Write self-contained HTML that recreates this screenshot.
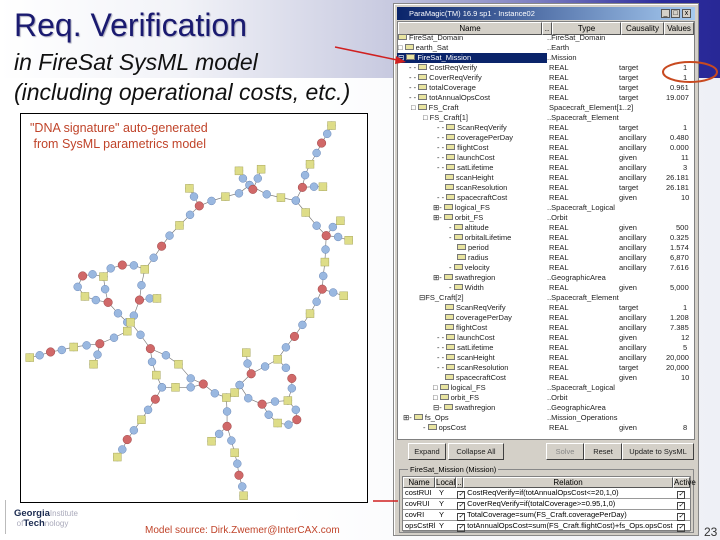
<!DOCTYPE html>
<html><head><meta charset="utf-8"><style>
*{margin:0;padding:0;box-sizing:border-box}
body{width:720px;height:540px;overflow:hidden;position:relative;background:#fff;font-family:"Liberation Sans",sans-serif}
#band{position:absolute;left:0;top:0;width:720px;height:78px;background:linear-gradient(90deg,#fff 0%,#f2f3f8 25%,#c8cae0 54%,#7a7cc0 75%,#2c2c9c 92%,#282896 100%)}
#band2{position:absolute;left:0;top:78px;width:720px;height:462px;background:linear-gradient(90deg,#fff 0%,#fff 40%,#eef0f6 100%)}
.t1{position:absolute;left:14px;top:7px;font-size:32px;color:#1a1a70;text-shadow:1px 1px 1px #aab}
.t2{position:absolute;left:14px;font-size:23px;font-style:italic;color:#111;line-height:26px}
#graph{position:absolute;left:20px;top:113px;width:348px;height:390px;border:1px solid #000;background:#fff}
#graph .cap{position:absolute;left:9px;top:6px;font-size:12.5px;color:#c0442a;line-height:16px}
#win{position:absolute;left:393px;top:3px;width:306px;height:533px;background:#d4d0c8;border:1px solid #888;box-shadow:inset 1px 1px #fff}
#title{position:absolute;left:3px;top:3px;width:298px;height:13px;background:linear-gradient(90deg,#0a246a,#a6caf0);color:#fff;font-size:7.5px;line-height:13px;padding-left:12px}
.tb{position:absolute;top:2px;width:9px;height:9px;background:#d4d0c8;border:1px solid #555;color:#000;font-size:7px;line-height:7px;text-align:center}
#tree{position:absolute;left:3px;top:17px;width:298px;height:419px;background:#fff;border:1px solid #808080}
.hd{position:absolute;top:0;height:13px;background:#d4d0c8;border:1px solid;border-color:#fff #555 #555 #fff;font-size:8px;line-height:11px;text-align:center;color:#000}
.r{position:absolute;left:0;width:296px;height:10px;font-size:7.5px;line-height:10px;color:#222;white-space:nowrap}
.r span{position:absolute}
.ic{display:inline-block;width:9px;height:6px;background:#e8e4a0;border:1px solid #777;margin-right:2px;vertical-align:0}
.sel{background:#0a246a;color:#fff}
.btn{position:absolute;top:439px;height:17px;background:#d4d0c8;border:1px solid;border-color:#fff #404040 #404040 #fff;font-size:7.5px;line-height:15px;text-align:center;color:#222}
#grp{position:absolute;left:5px;top:465px;width:295px;height:64px;border:1px solid #888}
.gl{position:absolute;left:8px;top:-5px;background:#d4d0c8;font-size:7.5px;padding:0 2px}
#tbl{position:absolute;left:2px;top:6px;width:289px;height:55px;background:#fff;border:1px solid #808080}
.r2{position:absolute;left:0;width:287px;height:11px;font-size:7.5px;line-height:10px;border-bottom:1px solid #999;white-space:nowrap}
.r2 span{position:absolute}
.cb{display:inline-block;width:8px;height:8px;border:1px solid #444;font-size:7px;line-height:6px;text-align:center;vertical-align:-1px}
</style></head><body>
<div id="band"></div><div id="band2"></div>
<div class="t1">Req. Verification</div>
<div class="t2" style="top:49px">in FireSat SysML model</div>
<div class="t2" style="top:79px">(including operational costs, etc.)</div>

<div id="graph">
<div class="cap">"DNA signature" auto-generated<br>&nbsp;from SysML parametrics model</div>
<svg width="348" height="390" viewBox="0 0 1050 1180" style="position:absolute;left:0;top:0">
<defs><marker id="m" markerUnits="userSpaceOnUse" markerWidth="28" markerHeight="28" refX="14" refY="14"><circle cx="14" cy="14" r="12" fill="#9ab8e0" stroke="#6a88b8" stroke-width="1.5"/></marker></defs>
<g fill="none" stroke="#777" stroke-width="2" marker-start="url(#m)" marker-mid="url(#m)" marker-end="url(#m)">
<polyline points="938,35 925,60 908,88 893,118 873,152 858,185 850,222 830,262 860,298 893,338 922,368 920,410 918,448 913,490 910,530 893,568 873,604 850,638 826,673 800,706 775,742 737,764 695,786 660,820 645,843 620,858 585,845 550,817 512,800 475,757 437,730 390,710 360,668 330,630 340,610 357,563 363,518 373,470 400,435 424,400 448,368 478,337 510,305 538,278 575,263 617,250 658,240 690,215 742,243 785,253 830,262"/>
<polyline points="690,215 670,195 658,172"/><polyline points="700,228 715,195 725,167"/>
<polyline points="850,222 885,220 912,220"/><polyline points="922,368 942,342 965,323"/>
<polyline points="922,368 958,372 990,382"/><polyline points="910,530 943,540 975,550"/>
<polyline points="538,278 522,250 508,225"/>
<polyline points="373,470 340,458 305,457 270,467 248,492 253,530 262,570 292,603 320,630 320,657 280,677 237,695 197,700 158,705 122,714 88,720 55,730 25,737"/>
<polyline points="248,492 215,485 185,490 170,523 192,552 225,563 262,570"/>
<polyline points="237,695 230,728 218,757"/><polyline points="357,563 388,558 410,558"/>
<polyline points="390,710 395,750 408,790 425,827 405,863 383,895 363,925 340,957 320,985 305,1015 290,1038"/>
<polyline points="425,827 466,827 512,827 550,817"/>
<polyline points="620,858 622,900 622,945 598,968 575,990"/>
<polyline points="622,945 635,988 645,1025 653,1058 658,1093 668,1127 672,1155"/>
<polyline points="660,820 686,860 728,878 767,870 806,867 818,830 818,800"/>
<polyline points="806,867 830,895 833,925 808,940 775,935 748,910 728,878"/>
<polyline points="695,786 684,755 680,722"/><polyline points="775,742 800,768"/>
</g>
<g fill="#d06868" stroke="#a04848" stroke-width="1.5">
<circle cx="908" cy="88" r="13"/><circle cx="850" cy="222" r="13"/><circle cx="922" cy="368" r="13"/><circle cx="910" cy="530" r="13"/><circle cx="826" cy="673" r="13"/><circle cx="695" cy="786" r="13"/><circle cx="538" cy="278" r="13"/><circle cx="424" cy="400" r="13"/><circle cx="305" cy="457" r="13"/><circle cx="185" cy="490" r="13"/><circle cx="262" cy="570" r="13"/><circle cx="357" cy="563" r="13"/><circle cx="237" cy="695" r="13"/><circle cx="88" cy="720" r="13"/><circle cx="390" cy="710" r="13"/><circle cx="550" cy="817" r="13"/><circle cx="405" cy="863" r="13"/><circle cx="320" cy="985" r="13"/><circle cx="622" cy="945" r="13"/><circle cx="658" cy="1093" r="13"/><circle cx="728" cy="878" r="13"/><circle cx="833" cy="925" r="13"/><circle cx="818" cy="800" r="13"/><circle cx="700" cy="228" r="13"/>
</g>
<g fill="#dedd88" stroke="#aaa860" stroke-width="1.5" transform="translate(-12,-12)">
<rect x="938" y="35" width="24" height="24"/><rect x="873" y="152" width="24" height="24"/><rect x="912" y="220" width="24" height="24"/><rect x="860" y="298" width="24" height="24"/><rect x="965" y="323" width="24" height="24"/><rect x="990" y="382" width="24" height="24"/><rect x="918" y="448" width="24" height="24"/><rect x="975" y="550" width="24" height="24"/><rect x="873" y="604" width="24" height="24"/><rect x="775" y="742" width="24" height="24"/><rect x="645" y="843" width="24" height="24"/><rect x="620" y="858" width="24" height="24"/><rect x="785" y="253" width="24" height="24"/><rect x="617" y="250" width="24" height="24"/><rect x="658" y="172" width="24" height="24"/><rect x="725" y="167" width="24" height="24"/><rect x="508" y="225" width="24" height="24"/><rect x="478" y="337" width="24" height="24"/><rect x="373" y="470" width="24" height="24"/><rect x="248" y="492" width="24" height="24"/><rect x="192" y="552" width="24" height="24"/><rect x="410" y="558" width="24" height="24"/><rect x="330" y="630" width="24" height="24"/><rect x="320" y="657" width="24" height="24"/><rect x="158" y="705" width="24" height="24"/><rect x="25" y="737" width="24" height="24"/><rect x="218" y="757" width="24" height="24"/><rect x="408" y="790" width="24" height="24"/><rect x="466" y="827" width="24" height="24"/><rect x="475" y="757" width="24" height="24"/><rect x="363" y="925" width="24" height="24"/><rect x="290" y="1038" width="24" height="24"/><rect x="575" y="990" width="24" height="24"/><rect x="645" y="1025" width="24" height="24"/><rect x="672" y="1155" width="24" height="24"/><rect x="806" y="867" width="24" height="24"/><rect x="775" y="935" width="24" height="24"/><rect x="680" y="722" width="24" height="24"/>
</g>
</svg>
</div>

<div style="position:absolute;left:5px;top:500px;width:1px;height:34px;background:#bbb"></div>
<div style="position:absolute;left:14px;top:509px;font-size:9.5px;font-weight:bold;color:#1a2a50;line-height:10px">Georgia<span style="font-weight:normal;color:#aab;font-size:8px">Institute</span><br>&nbsp;<span style="font-weight:normal;color:#aab;font-size:8px">of</span>Tech<span style="font-weight:normal;color:#aab;font-size:8px">nology</span></div>
<div style="position:absolute;left:145px;top:525px;font-size:10px;color:#c0442a">Model source: Dirk.Zwemer@InterCAX.com</div>
<div style="position:absolute;left:704px;top:525px;font-size:12px;color:#333">23</div>

<div id="win">
<div id="title">ParaMagic(TM) 16.9 sp1 - Instance02
<div class="tb" style="left:264px">_</div><div class="tb" style="left:274px">□</div><div class="tb" style="left:285px">x</div></div>
<div id="tree">
<div class="hd" style="left:0;width:144px">Name</div><div class="hd" style="left:144px;width:10px">..</div><div class="hd" style="left:154px;width:69px">Type</div><div class="hd" style="left:223px;width:43px">Causality</div><div class="hd" style="left:266px;width:30px">Values</div>
</div>
<div class="btn" style="left:14px;width:38px">Expand</div><div class="btn" style="left:54px;width:56px">Collapse All</div>
<div class="btn" style="left:152px;width:38px;color:#888">Solve</div><div class="btn" style="left:190px;width:38px">Reset</div><div class="btn" style="left:228px;width:72px">Update to SysML</div>
<div id="grp"><div class="gl">FireSat_Mission (Mission)</div>
<div id="tbl">
<div class="hd" style="left:0;width:32px;height:11px;line-height:9px">Name</div><div class="hd" style="left:32px;width:21px;height:11px;line-height:9px">Local</div><div class="hd" style="left:53px;width:7px;height:11px;line-height:9px">..</div><div class="hd" style="left:60px;width:210px;height:11px;line-height:9px">Relation</div><div class="hd" style="left:270px;width:17px;height:11px;line-height:9px">Active</div>
<div class="r2" style="top:11px"><span style="left:2px">costRUI</span><span style="left:36px">Y</span><span style="left:54px"><i class="cb">✓</i> CostReqVerify=if(totAnnualOpsCost&lt;=20,1,0)</span><span style="left:274px"><i class="cb">✓</i></span></div>
<div class="r2" style="top:22px"><span style="left:2px">covRUI</span><span style="left:36px">Y</span><span style="left:54px"><i class="cb">✓</i> CoverReqVerify=if(totalCoverage&gt;=0.95,1,0)</span><span style="left:274px"><i class="cb">✓</i></span></div>
<div class="r2" style="top:33px"><span style="left:2px">covRI</span><span style="left:36px">Y</span><span style="left:54px"><i class="cb">✓</i> TotalCoverage=sum(FS_Craft.coveragePerDay)</span><span style="left:274px"><i class="cb">✓</i></span></div>
<div class="r2" style="top:44px"><span style="left:2px">opsCstRl</span><span style="left:36px">Y</span><span style="left:54px"><i class="cb">✓</i> totAnnualOpsCost=sum(FS_Craft.flightCost)+fs_Ops.opsCost</span><span style="left:274px"><i class="cb">✓</i></span></div>
</div></div>
</div>

<div id="tr" style="position:absolute;left:397px;top:25px;width:296px">
<div class="r" style="top:8px"><span style="left:1px"><i class="ic"></i>FireSat_Domain</span><span style="left:150px">..FireSat_Domain</span></div>
<div class="r" style="top:18px"><span style="left:1px">□ <i class="ic"></i>earth_Sat</span><span style="left:150px">..Earth</span></div>
<div class="r sel" style="top:28px;width:150px"><span style="left:1px">⊟ <i class="ic"></i>FireSat_Mission</span></div><div class="r" style="top:28px"><span style="left:150px">..Mission</span></div>
<div class="r" style="top:38px"><span style="left:12px">- - <i class="ic"></i>CostReqVerify</span><span style="left:152px">REAL</span><span style="left:222px">target</span><span style="left:286px">1</span></div>
<div class="r" style="top:48px"><span style="left:12px">- - <i class="ic"></i>CoverReqVerify</span><span style="left:152px">REAL</span><span style="left:222px">target</span><span style="left:286px">1</span></div>
<div class="r" style="top:58px"><span style="left:12px">- - <i class="ic"></i>totalCoverage</span><span style="left:152px">REAL</span><span style="left:222px">target</span><span style="left:273px">0.961</span></div>
<div class="r" style="top:68px"><span style="left:12px">- - <i class="ic"></i>totAnnualOpsCost</span><span style="left:152px">REAL</span><span style="left:222px">target</span><span style="left:269px">19.007</span></div>
<div class="r" style="top:78px"><span style="left:14px">□ <i class="ic"></i>FS_Craft</span><span style="left:152px">Spacecraft_Element[1..2]</span></div>
<div class="r" style="top:88px"><span style="left:26px">□ FS_Craft[1]</span><span style="left:150px">..Spacecraft_Element</span></div>
<div class="r" style="top:98px"><span style="left:40px">- - <i class="ic"></i>ScanReqVerify</span><span style="left:152px">REAL</span><span style="left:222px">target</span><span style="left:286px">1</span></div>
<div class="r" style="top:108px"><span style="left:40px">- - <i class="ic"></i>coveragePerDay</span><span style="left:152px">REAL</span><span style="left:222px">ancillary</span><span style="left:273px">0.480</span></div>
<div class="r" style="top:118px"><span style="left:40px">- - <i class="ic"></i>flightCost</span><span style="left:152px">REAL</span><span style="left:222px">ancillary</span><span style="left:273px">0.000</span></div>
<div class="r" style="top:128px"><span style="left:40px">- - <i class="ic"></i>launchCost</span><span style="left:152px">REAL</span><span style="left:222px">given</span><span style="left:284px">11</span></div>
<div class="r" style="top:138px"><span style="left:40px">- - <i class="ic"></i>satLifetime</span><span style="left:152px">REAL</span><span style="left:222px">ancillary</span><span style="left:286px">3</span></div>
<div class="r" style="top:148px"><span style="left:48px"><i class="ic"></i>scanHeight</span><span style="left:152px">REAL</span><span style="left:222px">ancillary</span><span style="left:269px">26.181</span></div>
<div class="r" style="top:158px"><span style="left:48px"><i class="ic"></i>scanResolution</span><span style="left:152px">REAL</span><span style="left:222px">target</span><span style="left:269px">26.181</span></div>
<div class="r" style="top:168px"><span style="left:40px">- - <i class="ic"></i>spacecraftCost</span><span style="left:152px">REAL</span><span style="left:222px">given</span><span style="left:284px">10</span></div>
<div class="r" style="top:178px"><span style="left:36px">⊞- <i class="ic"></i>logical_FS</span><span style="left:150px">..Spacecraft_Logical</span></div>
<div class="r" style="top:188px"><span style="left:36px">⊞- <i class="ic"></i>orbit_FS</span><span style="left:150px">..Orbit</span></div>
<div class="r" style="top:198px"><span style="left:52px">- <i class="ic"></i>altitude</span><span style="left:152px">REAL</span><span style="left:222px">given</span><span style="left:279px">500</span></div>
<div class="r" style="top:208px"><span style="left:52px">- <i class="ic"></i>orbitalLifetime</span><span style="left:152px">REAL</span><span style="left:222px">ancillary</span><span style="left:273px">0.325</span></div>
<div class="r" style="top:218px"><span style="left:60px"><i class="ic"></i>period</span><span style="left:152px">REAL</span><span style="left:222px">ancillary</span><span style="left:273px">1.574</span></div>
<div class="r" style="top:228px"><span style="left:60px"><i class="ic"></i>radius</span><span style="left:152px">REAL</span><span style="left:222px">ancillary</span><span style="left:273px">6,870</span></div>
<div class="r" style="top:238px"><span style="left:52px">- <i class="ic"></i>velocity</span><span style="left:152px">REAL</span><span style="left:222px">ancillary</span><span style="left:273px">7.616</span></div>
<div class="r" style="top:248px"><span style="left:36px">⊞- <i class="ic"></i>swathregion</span><span style="left:150px">..GeographicArea</span></div>
<div class="r" style="top:258px"><span style="left:52px">- <i class="ic"></i>Width</span><span style="left:152px">REAL</span><span style="left:222px">given</span><span style="left:273px">5,000</span></div>
<div class="r" style="top:268px"><span style="left:22px">⊟FS_Craft[2]</span><span style="left:150px">..Spacecraft_Element</span></div>
<div class="r" style="top:278px"><span style="left:48px"><i class="ic"></i>ScanReqVerify</span><span style="left:152px">REAL</span><span style="left:222px">target</span><span style="left:286px">1</span></div>
<div class="r" style="top:288px"><span style="left:48px"><i class="ic"></i>coveragePerDay</span><span style="left:152px">REAL</span><span style="left:222px">ancillary</span><span style="left:273px">1.208</span></div>
<div class="r" style="top:298px"><span style="left:48px"><i class="ic"></i>flightCost</span><span style="left:152px">REAL</span><span style="left:222px">ancillary</span><span style="left:273px">7.385</span></div>
<div class="r" style="top:308px"><span style="left:40px">- - <i class="ic"></i>launchCost</span><span style="left:152px">REAL</span><span style="left:222px">given</span><span style="left:284px">12</span></div>
<div class="r" style="top:318px"><span style="left:40px">- - <i class="ic"></i>satLifetime</span><span style="left:152px">REAL</span><span style="left:222px">ancillary</span><span style="left:286px">5</span></div>
<div class="r" style="top:328px"><span style="left:40px">- - <i class="ic"></i>scanHeight</span><span style="left:152px">REAL</span><span style="left:222px">ancillary</span><span style="left:269px">20,000</span></div>
<div class="r" style="top:338px"><span style="left:40px">- - <i class="ic"></i>scanResolution</span><span style="left:152px">REAL</span><span style="left:222px">target</span><span style="left:269px">20,000</span></div>
<div class="r" style="top:348px"><span style="left:48px"><i class="ic"></i>spacecraftCost</span><span style="left:152px">REAL</span><span style="left:222px">given</span><span style="left:284px">10</span></div>
<div class="r" style="top:358px"><span style="left:36px">□ <i class="ic"></i>logical_FS</span><span style="left:150px">..Spacecraft_Logical</span></div>
<div class="r" style="top:368px"><span style="left:36px">□ <i class="ic"></i>orbit_FS</span><span style="left:150px">..Orbit</span></div>
<div class="r" style="top:378px"><span style="left:36px">⊟- <i class="ic"></i>swathregion</span><span style="left:150px">..GeographicArea</span></div>
<div class="r" style="top:388px"><span style="left:6px">⊞- <i class="ic"></i>fs_Ops</span><span style="left:150px">..Mission_Operations</span></div>
<div class="r" style="top:398px"><span style="left:26px">- <i class="ic"></i>opsCost</span><span style="left:152px">REAL</span><span style="left:222px">given</span><span style="left:286px">8</span></div>
</div>

<svg width="720" height="540" style="position:absolute;left:0;top:0;pointer-events:none">
<line x1="335" y1="47" x2="402" y2="61" stroke="#d02020" stroke-width="1.5"/>
<polygon points="406,62 396,56 395,64" fill="#d02020"/>
<line x1="373" y1="501" x2="398" y2="501" stroke="#d02020" stroke-width="1.5"/>
<ellipse cx="690" cy="72" rx="27" ry="10" fill="none" stroke="#c84a20" stroke-width="2"/>
</svg>
</body></html>
